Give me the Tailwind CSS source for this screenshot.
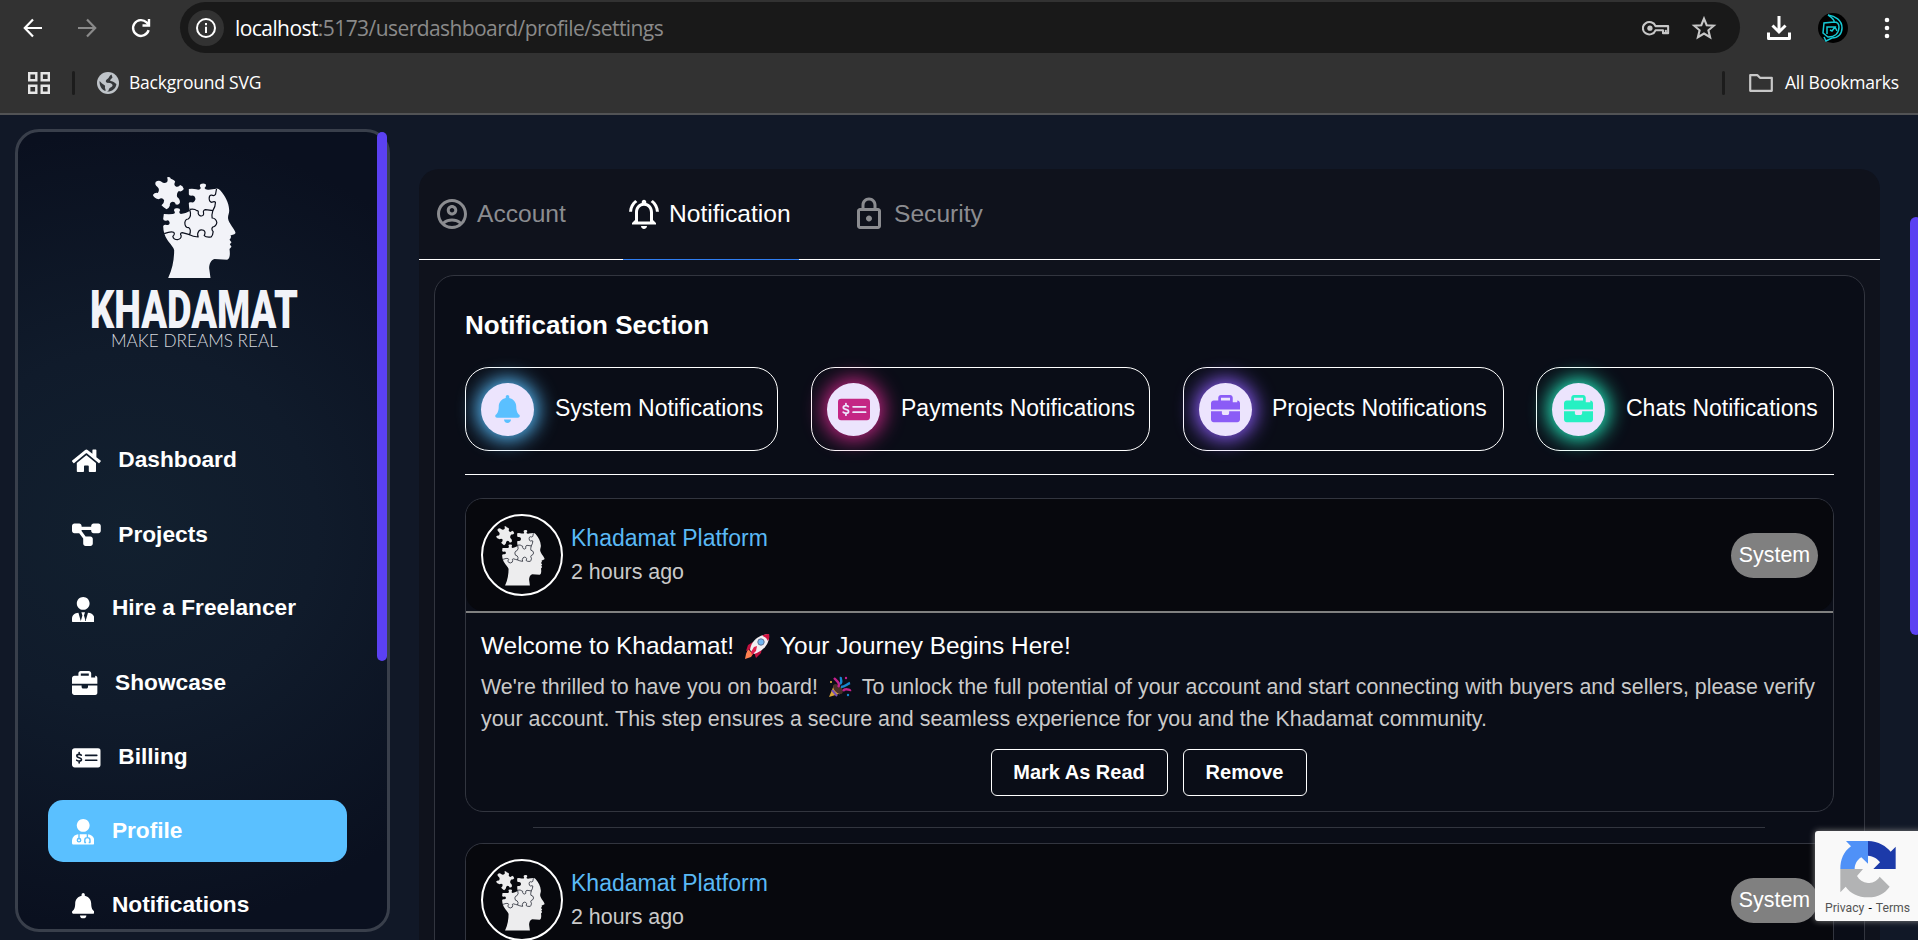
<!DOCTYPE html>
<html lang="en">
<head>
<meta charset="utf-8">
<title>Khadamat - Notification settings</title>
<script src="https://cdn.jsdelivr.net/npm/@tailwindcss/browser@4"></script>
</head>
<body class="h-[940px] w-[1918px] overflow-hidden bg-[#111827] font-['Liberation_Sans',Arial,sans-serif] text-white">

<svg width="0" height="0" class="absolute">
  <symbol id="head" viewBox="455 180 260 312">
    <path fill="currentColor" d="M503 187Q512 184 514 191Q526 195 527 200Q521 210 530 215Q538 217 542 210Q550 212 553 222Q546 232 538 228Q530 236 533 246Q543 254 541 264Q536 272 528 268Q528 260 519 260Q510 262 511 272Q508 280 501 283Q492 278 486 271Q494 266 494 256Q488 246 478 253Q464 250 460 240Q466 232 475 234Q482 224 474 216Q464 208 469 200Q478 194 486 200Q494 208 503 201Q506 196 503 187Z"/>
    <path fill="currentColor" d="M568 222Q580 220 590 223Q602 226 604 219Q598 211 604 207Q611 204 618 207Q622 213 615 219Q617 225 628 224L650 221Q657 220 662 226C676 242 688 262 689 285C690 295 684 302 686 312C688 325 706 343 708 353C708 358 698 360 693 361Q697 368 690 374L696 382L691 388L696 395L690 402C692 415 692 432 683 434L645 432C634 434 629 448 629 460L633 489H506C520 460 524 430 524 405C520 390 496 375 492 345L491 333Q494 328 502 330Q512 330 510 321Q508 314 500 317Q492 318 491 312L493 297Q510 298 520 297Q530 295 524 288Q522 280 530 280Q542 278 542 286Q536 294 544 297Q556 297 571 288Q568 276 568 266Q567 260 576 262Q585 264 588 252Q586 240 575 242Q568 242 568 238Z"/>
    <g fill="none" stroke="#0b0f1c" stroke-width="3.6" stroke-linejoin="round">
      <path d="M571 283Q585 280 592 287Q598 286 596 295Q598 303 606 303Q614 302 612 293Q610 286 618 284L641 287"/>
      <path d="M651 222L648 238Q644 244 636 240Q629 240 629 250Q629 261 637 262Q645 258 648 262Q648 275 640 287Q636 300 638 309Q650 310 652 323Q650 334 640 336Q634 342 641 350Q640 362 635 366Q620 368 614 362Q620 350 612 346Q604 342 598 348Q592 356 596 366Q580 364 570 359Q576 345 568 338Q556 338 556 323Q558 312 566 312Q577 305 571 285"/>
      <path d="M494 356Q515 348 522 352Q528 356 520 364Q522 374 534 374Q546 372 545 362Q540 354 548 353Q560 356 570 359"/>
    </g>
  </symbol>
  <symbol id="bell" viewBox="0 0 448 512"><path fill="currentColor" d="M224 512c35.32 0 63.97-28.65 63.97-64H160.03c0 35.35 28.65 64 63.97 64zm215.39-149.71c-19.32-20.76-55.47-51.99-55.47-154.29 0-77.7-54.48-139.9-127.94-155.16V32c0-17.67-14.32-32-31.98-32s-31.98 14.33-31.98 32v20.84C118.56 68.1 64.08 130.3 64.08 208c0 102.3-36.15 133.53-55.47 154.29-6 6.45-8.66 14.16-8.61 21.71.11 16.4 12.98 32 32.1 32h383.8c19.12 0 32-15.6 32.1-32 .05-7.55-2.61-15.27-8.61-21.71z"/></symbol>
  <symbol id="case" viewBox="0 0 512 512"><path fill="currentColor" d="M320 320c0 17-14 32-32 32h-64c-18 0-32-15-32-32v-32H0v144c0 25.600 22.400 48 48 48h416c25.600 0 48-22.400 48-48V288H320v32zm144-192h-80V48c0-25.600-22.400-48-48-48H176c-25.600 0-48 22.400-48 48v48H48c-25.600 0-48 22.400-48 48v112h512V144c0-25.600-22.400-48-48-48zm-128-32H176V48h160v48z"/></symbol>
  <symbol id="check" viewBox="0 0 576 512">
    <mask id="checkcut"><rect width="576" height="512" fill="#fff"/><g fill="none" stroke="#000" stroke-width="32" stroke-linecap="round"><path d="M272 208H496M272 304H496"/><path d="M186 204C176 192 160 188 144 188C116 188 96 200 96 220C96 268 190 240 190 290C190 312 168 322 144 322C124 322 106 316 94 304M143 150V186M143 324V358"/></g></mask>
    <rect y="64" width="576" height="384" rx="56" fill="currentColor" mask="url(#checkcut)"/>
  </symbol>
</svg>

<div class="flex h-full w-full flex-col">
  <!-- browser toolbar -->
  <header class="h-[115px] w-full shrink-0 border-b-2 border-[#525355] bg-[#323232] font-['Open_Sans','Noto_Sans',sans-serif]">
    <div class="flex h-[55px] items-center pl-[20px]">
      <svg class="h-[26px] w-[26px]" viewBox="0 0 26 26" fill="none" stroke="#fff" stroke-width="2.200"><path d="M22 13H5M13 4.500L4.800 13L13 21.500"/></svg>
      <svg class="ml-[28px] h-[26px] w-[26px]" viewBox="0 0 26 26" fill="none" stroke="#8a8a8a" stroke-width="2.200"><path d="M4 13H21M13 4.500L21.200 13L13 21.500"/></svg>
      <svg class="ml-[28px] h-[26px] w-[26px]" viewBox="0 0 26 26" fill="none" stroke="#fff" stroke-width="2.400"><path d="M20.600 15.200A7.900 7.900 0 1 1 18.600 7.400L21 9.800"/><path d="M21 4V10.500H14.500" /></svg>
      <div class="ml-[26px] flex h-[51px] w-[1560px] items-center rounded-full bg-[#191919] pl-[8px]">
        <div class="flex h-[36px] w-[36px] items-center justify-center rounded-full bg-[#323232]">
          <svg class="h-[22px] w-[22px]" viewBox="0 0 22 22" fill="none" stroke="#fff" stroke-width="2"><circle cx="11" cy="11" r="9"/><path d="M11 9.800V16M11 6V8.200"/></svg>
        </div>
        <div class="ml-[11px] w-[440px] whitespace-nowrap text-[21px] leading-[30px] tracking-[-0.57px] text-[#8a8a8a]"><span class="text-white">localhost</span>:5173/userdashboard/profile/settings</div>
        <svg class="ml-[967px] h-[20px] w-[28px]" viewBox="0 0 30 20" fill="none" stroke="#c7c7c7" stroke-width="2.200"><path d="M14.500 8H28V15.500H22.500V12.500H14.500A7 6.600 0 1 1 14.500 8Z" stroke-linejoin="round"/><circle cx="8.500" cy="10.200" r="2.800" fill="#c7c7c7" stroke="none"/><path d="M25.500 12V15"/></svg>
        <svg class="ml-[21px] h-[24px] w-[26px]" viewBox="0 0 26 24" fill="none" stroke="#c7c7c7" stroke-width="2.100"><path d="M13 2.600L15.700 9.200L22.800 9.700L17.400 14.300L19.100 21.200L13 17.500L6.900 21.200L8.600 14.300L3.200 9.700L10.300 9.200Z"/></svg>
      </div>
      <svg class="ml-[26px] h-[26px] w-[26px]" viewBox="0 0 26 26" fill="none" stroke="#fff" stroke-width="3"><path d="M13 1V16M6.500 10.500L13 17L19.500 10.500"/><path d="M2.500 17.500V23.500H23.500V17.500" stroke-linejoin="round"/></svg>
      <svg class="ml-[26px] h-[30px] w-[30px]" viewBox="0 0 30 30"><circle cx="15" cy="15" r="15" fill="#000"/><g fill="none" stroke="#16c8d4" stroke-width="1.500"><path d="M10 2C17 3 24 7 24 15C24 21 20 25 14 25L8 28L6 24"/><path d="M10 2C14 5 17 7 16 9L6 10L5 20L10 24C17 24 21 20 21 14C21 11 19 9 16 9"/><path d="M9 21V14H17L14 18L12 17M17 14L19 18"/></g></svg>
      <svg class="ml-[35px] h-[24px] w-[8px]" viewBox="0 0 8 24" fill="#fff"><circle cx="4" cy="4" r="2.300"/><circle cx="4" cy="12" r="2.300"/><circle cx="4" cy="20" r="2.300"/></svg>
    </div>
    <div class="flex h-[56px] items-center pl-[28px] text-[17.500px] tracking-[-0.22px]">
      <svg class="h-[22px] w-[22px]" viewBox="0 0 22 22" fill="none" stroke="#e6e6e6" stroke-width="2.400"><path d="M1.200 1.200H8.300V8.300H1.200ZM13.700 1.200H20.800V8.300H13.700ZM1.200 13.700H8.300V20.800H1.200ZM13.700 13.700H20.800V20.800H13.700Z"/></svg>
      <div class="ml-[22px] h-[24px] w-[3px] rounded bg-[#1c1c1c]"></div>
      <svg class="ml-[22px] h-[22px] w-[22px]" viewBox="0 0 22 22"><circle cx="11" cy="11" r="11" fill="#bfc4c9"/><g fill="#35383b"><path d="M14.500 2.600C12 4 12.500 5.500 11 6.500C9 8 8 9 9.500 10.500C11 11.500 15 10.500 15.500 13C16 15 12.500 15.500 12 17C11.500 18.500 11.500 19 10 19.500C14 20 19 17 19.400 12C18 11 16.500 9.500 13.800 9C12 8.500 14.500 6.500 15.500 5.500Z"/><path d="M2.600 9C2.200 14 5 18 8.500 19C9 17 7.500 16.500 8 15C8.800 13 6 12.500 5 11.500Z"/></g></svg>
      <div class="-mt-[2px] ml-[10px] w-[140px] whitespace-nowrap">Background SVG</div>
      <div class="ml-[1453px] h-[24px] w-[3px] rounded bg-[#1c1c1c]"></div>
      <svg class="ml-[24px] h-[20px] w-[24px]" viewBox="0 0 24 20" fill="none" stroke="#c7c7c7" stroke-width="2.200" stroke-linejoin="round"><path d="M1.200 2.200H8.500L11 4.800H22.800V17.800H1.200Z"/></svg>
      <div class="-mt-[2px] ml-[12px] whitespace-nowrap">All Bookmarks</div>
    </div>
  </header>

  <div class="flex h-[825px] w-full">
    <!-- sidebar -->
    <aside class="relative ml-[15px] mt-[14px] h-[803px] w-[375px] shrink-0 overflow-hidden rounded-[24px] border-[3px] border-[#393f4b] bg-[radial-gradient(ellipse_420px_400px_at_30%_50%,#12202f_0%,#101b2b_45%,#0a101f_100%)]">
      <div class="flex flex-col items-center pr-[10px]">
        <svg class="-ml-[6px] mt-[43px] h-[104px] w-[87px] text-[#f2f3f8]"><use href="#head"/></svg>
        <svg class="-ml-[8px] mt-[4px] h-[72px] w-[220px] overflow-visible" viewBox="0 0 220 72"><text x="6" y="44.500" textLength="208" lengthAdjust="spacingAndGlyphs" class="fill-[#f2f3f8] font-['Roboto'] text-[53px] font-black">KHADAMAT</text><text x="27" y="63.500" textLength="167" lengthAdjust="spacingAndGlyphs" class="fill-[#d5d8de] font-['Lato'] text-[18px] font-light">MAKE DREAMS REAL</text></svg>
      </div>
      <nav class="ml-[30px] mt-[74px] flex w-[299px] flex-col gap-[12.200px] text-[22.700px] font-bold">
        <a class="flex h-[62px] items-center gap-[17.500px] pl-[24px]"><svg class="mt-[2px] h-[25.600px] w-[28.800px]" viewBox="0 0 576 512" fill="#fff"><path d="M280.370 148.260L96 300.110V464a16 16 0 0 0 16 16l112.060-.29a16 16 0 0 0 15.920-16V368a16 16 0 0 1 16-16h64a16 16 0 0 1 16 16v95.640a16 16 0 0 0 16 16.050L464 480a16 16 0 0 0 16-16V300L295.670 148.260a12.190 12.190 0 0 0-15.300 0zM571.600 251.470L488 182.560V44.050a12 12 0 0 0-12-12h-56a12 12 0 0 0-12 12v72.610L318.470 43a48 48 0 0 0-61 0L4.340 251.470a12 12 0 0 0-1.600 16.900l25.500 31A12 12 0 0 0 45.150 301l235.220-193.740a12.190 12.190 0 0 1 15.300 0L530.900 301a12 12 0 0 0 16.900-1.600l25.500-31a12 12 0 0 0-1.700-16.930z"/></svg><span class="-mt-[1px]">Dashboard</span></a>
        <a class="flex h-[62px] items-center gap-[17.500px] pl-[24px]"><svg class="mt-[2px] h-[25.600px] w-[28.800px]" viewBox="0 0 576 512" fill="#fff"><path d="M0 80C0 53.500 21.500 32 48 32h96c26.500 0 48 21.500 48 48V96H384V80c0-26.500 21.500-48 48-48h96c26.500 0 48 21.500 48 48v96c0 26.500-21.500 48-48 48H432c-26.500 0-48-21.500-48-48V160H192v16c0 1.700-.1 3.400-.3 5L272 288h96c26.500 0 48 21.500 48 48v96c0 26.500-21.500 48-48 48H272c-26.500 0-48-21.500-48-48V336c0-1.700 .1-3.400 .3-5L144 224H48c-26.500 0-48-21.500-48-48V80z"/></svg><span class="-mt-[1px]">Projects</span></a>
        <a class="flex h-[62px] items-center gap-[17.500px] pl-[24px]"><svg class="mt-[2px] h-[25.600px] w-[22.400px]" viewBox="0 0 448 512" fill="#fff"><path d="M224 256c70.700 0 128-57.300 128-128S294.700 0 224 0 96 57.300 96 128s57.300 128 128 128zm95.800 56.600L272 480l-32-110 20-66h-72l20 66-32 110-47.800-167.400C56.900 316 0 360.300 0 432.400V480c0 18 14 32 32 32h384c18 0 32-14 32-32v-47.600c0-72.100-56.900-116.400-128.200-119.800z"/></svg><span class="-mt-[2px]">Hire a Freelancer</span></a>
        <a class="flex h-[62px] items-center gap-[17.500px] pl-[24px]"><svg class="mt-[2px] h-[25.600px] w-[25.600px]"><use href="#case"/></svg><span class="-mt-[2px]">Showcase</span></a>
        <a class="flex h-[62px] items-center gap-[17.500px] pl-[24px]"><svg class="mt-[2px] h-[25.600px] w-[28.800px]"><use href="#check"/></svg><span class="-mt-[2px]">Billing</span></a>
        <a class="flex h-[62px] items-center gap-[17.500px] rounded-[15px] bg-[#5ac0ff] pl-[24px]"><svg class="mt-[2px] h-[25.600px] w-[22.400px]" viewBox="0 0 448 512" fill="#fff"><path d="M224 256c70.700 0 128-57.300 128-128S294.700 0 224 0 96 57.300 96 128s57.300 128 128 128z"/><path d="M130 304H318C400 310 448 370 448 440V480C448 498 434 512 416 512H32C14 512 0 498 0 480V440C0 370 48 310 130 304Z"/><g fill="none" stroke="#5ac0ff" stroke-width="28"><path d="M140 300V392M308 300V372M256 470V420C256 390 280 372 308 372C336 372 360 390 360 420V470"/><circle cx="140" cy="424" r="34"/><path d="M248 470H282M334 470H368"/></g></svg><span class="-mt-[2px]">Profile</span></a>
        <a class="flex h-[62px] items-center gap-[17.500px] pl-[24px]"><svg class="mt-[2px] h-[25.600px] w-[22.400px]"><use href="#bell"/></svg><span class="-mt-[2px]">Notifications</span></a>
      </nav>
    </aside>
    <!-- sidebar scrollbar thumb, drawn over the rounded border -->
    <div class="absolute left-[377px] top-[132px] h-[529px] w-[10px] rounded-full bg-[#5b41f2]"></div>

    <!-- settings panel -->
    <main class="ml-[29px] mt-[54px] h-[771px] w-[1461px] shrink-0 rounded-t-[20px] bg-[#0f121c]">
      <div class="flex h-[91px] border-b border-white text-[24.600px] text-[#8b8c90]">
        <div class="flex w-[204px] items-center gap-[7px] pl-[15px]"><svg class="h-[36px] w-[36px]" viewBox="0 0 24 24" fill="currentColor"><path fill-rule="evenodd" d="M12 2C6.480 2 2 6.480 2 12s4.480 10 10 10 10-4.480 10-10S17.520 2 12 2M7.350 18.500C8.660 17.560 10.260 17 12 17s3.340.56 4.650 1.500c-1.310.94-2.910 1.500-4.650 1.500s-3.340-.56-4.650-1.500m10.790-1.380C16.450 15.800 14.320 15 12 15s-4.450.8-6.140 2.120C4.700 15.730 4 13.950 4 12c0-4.420 3.580-8 8-8s8 3.580 8 8c0 1.950-.7 3.730-1.860 5.120M12 6c-1.930 0-3.500 1.570-3.500 3.500S10.070 13 12 13s3.500-1.570 3.500-3.500S13.930 6 12 6m0 5c-.83 0-1.500-.67-1.500-1.500S11.170 8 12 8s1.500.67 1.500 1.500S12.830 11 12 11"/></svg>Account</div>
        <div class="-mb-px flex w-[176px] items-center gap-[7px] border-b border-[#2f7df0] pl-[3px] text-white"><svg class="h-[36px] w-[36px]" viewBox="0 0 24 24" fill="currentColor"><path d="M12 22c1.100 0 2-.9 2-2h-4c0 1.100.9 2 2 2zm6-6v-5c0-3.070-1.630-5.640-4.500-6.320V4c0-.83-.67-1.500-1.500-1.500s-1.500.67-1.500 1.500v.68C7.640 5.360 6 7.920 6 11v5l-2 2v1h16v-1l-2-2zm-2 1H8v-6c0-2.480 1.510-4.500 4-4.500s4 2.020 4 4.500v6zM7.580 4.080L6.150 2.650C3.750 4.480 2.170 7.300 2.030 10.500h2c.15-2.650 1.510-4.970 3.550-6.420zm12.390 6.420h2c-.15-3.200-1.730-6.020-4.120-7.850l-1.420 1.430c2.020 1.450 3.390 3.770 3.540 6.420z"/></svg>Notification</div>
        <div class="flex items-center gap-[7px] pl-[52px]"><svg class="h-[36px] w-[36px]" viewBox="0 0 24 24" fill="currentColor"><path d="M18 8h-1V6c0-2.760-2.240-5-5-5S7 3.240 7 6v2H6c-1.100 0-2 .9-2 2v10c0 1.100.9 2 2 2h12c1.100 0 2-.9 2-2V10c0-1.100-.9-2-2-2zM9 6c0-1.660 1.340-3 3-3s3 1.340 3 3v2H9V6zm9 14H6V10h12v10zm-6-3c1.100 0 2-.9 2-2s-.9-2-2-2-2 .9-2 2 .9 2 2 2z"/></svg>Security</div>
      </div>

      <section class="ml-[15px] mt-[15px] h-[690px] w-[1431px] rounded-t-[20px] border border-[#32353f] bg-[#0a0d17] px-[30px] pt-[34px]">
        <h2 class="h-[30px] text-[26px] font-bold leading-[30px]">Notification Section</h2>
        <div class="mt-[27px] flex h-[84px] w-[1369px] gap-[33px] text-[23px]">
          <div class="flex w-[313px] items-center gap-[21px] whitespace-nowrap rounded-[24px] border border-white pl-[15px]"><span class="flex h-[53px] w-[53px] shrink-0 items-center justify-center rounded-full bg-[#ece4fd] text-[#5ac0ff] shadow-[0_0_20px_4px_#5ac0ff]"><svg class="h-[28px] w-[25px]"><use href="#bell"/></svg></span><span class="-mt-[2px]">System Notifications</span></div>
          <div class="flex w-[339px] items-center gap-[21px] whitespace-nowrap rounded-[24px] border border-white pl-[15px]"><span class="flex h-[53px] w-[53px] shrink-0 items-center justify-center rounded-full bg-[#ece4fd] text-[#c42684] shadow-[0_0_20px_4px_#c42684]"><svg class="h-[29px] w-[32px]"><use href="#check"/></svg></span><span class="-mt-[2px]">Payments Notifications</span></div>
          <div class="flex w-[321px] items-center gap-[20px] whitespace-nowrap rounded-[24px] border border-white pl-[15px]"><span class="flex h-[53px] w-[53px] shrink-0 items-center justify-center rounded-full bg-[#ece4fd] text-[#8b5cf6] shadow-[0_0_20px_4px_#8b5cf6]"><svg class="h-[29px] w-[29px]"><use href="#case"/></svg></span><span class="-mt-[2px]">Projects Notifications</span></div>
          <div class="-ml-px flex w-[298px] items-center gap-[21px] whitespace-nowrap rounded-[24px] border border-white pl-[15px]"><span class="flex h-[53px] w-[53px] shrink-0 items-center justify-center rounded-full bg-[#ece4fd] text-[#26f0c2] shadow-[0_0_20px_4px_#26f0c2]"><svg class="h-[29px] w-[29px]"><use href="#case"/></svg></span><span class="-mt-[2px]">Chats Notifications</span></div>
        </div>
        <div class="mt-[23px] h-px w-[1369px] bg-white"></div>

        <article class="mt-[23px] h-[314px] w-[1369px] rounded-[18px] border border-[#32353f]">
          <div class="border-b-2 border-[#808080]">
            <div class="flex h-[112px] items-center rounded-[17px] bg-[#07080d] px-[15px]">
              <div class="flex h-[82px] w-[82px] items-center justify-center rounded-full border-2 border-white"><svg class="-ml-[3px] mt-[1px] h-[61px] w-[51px] text-[#ededee]"><use href="#head"/></svg></div>
              <div class="ml-[8px] flex flex-1 flex-col"><span class="h-[34px] text-[23px] leading-[34px] text-[#5ab9f5]">Khadamat Platform</span><span class="h-[34px] text-[21.400px] leading-[34px] text-[#cacaca]">2 hours ago</span></div>
              <div class="flex h-[45px] w-[87px] items-center justify-center rounded-[23px] bg-[#808080] text-[21.400px]">System</div>
            </div>
          </div>
          <div class="px-[15px] pt-[17px]">
            <h3 class="flex h-[32px] items-center whitespace-nowrap text-[24.400px]">Welcome to Khadamat!<svg class="mx-[9px] h-[28px] w-[28px]" viewBox="0 0 28 28"><path d="M5 17L3 22L2 27L8 25L10 22Z" fill="#ff8050"/><path d="M10 10L5 13L3 19L8 17ZM19 16L18 21L13 26L11 20Z" fill="#c4103f"/><path d="M7 18C8 10 14 3 26 2C27 12 20 19 11 22Z" fill="#f1eef2"/><path d="M19 3.500Q23 1.500 26 2Q27 6 25 9Q23 5 19 3.500Z" fill="#d0103f"/><circle cx="18" cy="10" r="3.200" fill="#6fb5f2" stroke="#5c6f93"/><path d="M14 14L13 19L9 23L8 20L11 15Z" fill="#e3214e"/></svg>Your Journey Begins Here!</h3>
            <p class="mt-[9px] whitespace-nowrap text-[21.420px] leading-[32px] text-[#cacaca]"><span class="flex h-[32px] w-[1334px] items-center justify-between"><span>We're thrilled to have you on board!</span><svg class="h-[24px] w-[24px]" viewBox="0 0 24 24" fill="none"><path d="M1 22L6 10L14 18Z" fill="#d9a437"/><path d="M4 15L9 21M6 11L12 19" stroke="#7650b8" stroke-width="2"/><ellipse cx="10" cy="14" rx="3.500" ry="6" transform="rotate(-45 10 14)" fill="#4a3028"/><path d="M10 12C13 9 9 6 6 3M15 16C18 12 21 16 23 15" stroke="#c3208c" stroke-width="2.400"/><path d="M13 12C17 12 19 9 22 8M12 9C15 7 12 4 13 2" stroke="#1687ce" stroke-width="2.400"/><circle cx="3" cy="7" r="1" fill="#f0c040"/><circle cx="18" cy="3" r="1.200" fill="#c3208c"/><circle cx="20" cy="20" r="1.200" fill="#1687ce"/></svg><span>To unlock the full potential of your account and start connecting with buyers and sellers, please verify</span></span>your account. This step ensures a secure and seamless experience for you and the Khadamat community.</p>
            <div class="mt-[14px] flex h-[47px] justify-center gap-[15px] pr-[2px] text-[20px] font-bold"><button class="w-[177px] rounded-[6px] border border-white pb-px">Mark As Read</button><button class="w-[124px] rounded-[6px] border border-white pb-px">Remove</button></div>
          </div>
        </article>
        <div class="ml-[68px] mt-[15px] h-px w-[1232px] bg-[#32353f]"></div>
        <article class="mt-[15px] h-[97px] w-[1369px] overflow-hidden rounded-t-[18px] border border-b-0 border-[#32353f]">
          <div class="flex h-[112px] items-center bg-[#07080d] px-[15px]">
            <div class="flex h-[82px] w-[82px] items-center justify-center rounded-full border-2 border-white"><svg class="-ml-[3px] mt-[1px] h-[61px] w-[51px] text-[#ededee]"><use href="#head"/></svg></div>
            <div class="ml-[8px] flex flex-1 flex-col"><span class="h-[34px] text-[23px] leading-[34px] text-[#5ab9f5]">Khadamat Platform</span><span class="h-[34px] text-[21.400px] leading-[34px] text-[#cacaca]">2 hours ago</span></div>
            <div class="flex h-[45px] w-[87px] items-center justify-center rounded-[23px] bg-[#808080] text-[21.400px]">System</div>
          </div>
        </article>
      </section>
    </main>
  </div>
</div>

<!-- page scrollbar thumb -->
<div class="absolute left-[1910px] top-[217px] h-[418px] w-[12px] rounded-full bg-[#5b41f2]"></div>

<!-- reCAPTCHA badge -->
<div class="absolute left-[1815px] top-[831px] flex h-[90px] w-[110px] flex-col rounded-[3px] bg-[#f9f9f9] shadow-[0_0_6px_#808080]">
  <svg class="ml-[25px] mt-[9px] h-[58px] w-[57px]" viewBox="840 1080 171 174"><path fill="#1c3aa9" d="M924 1083C955 1083 980 1100 992 1115L1007 1100V1167H940L960 1147C955 1138 940 1128 924 1127Z"/><path fill="#4f91f7" d="M924 1083H858L873 1099C850 1115 841 1140 841 1167H884C884 1155 890 1140 904 1132L924 1151Z"/><path fill="#b2b3b4" d="M841 1167V1237L857 1220C870 1240 895 1252 924 1252C955 1252 975 1240 989 1220L959 1190C950 1205 935 1209 924 1209C908 1207 898 1200 891 1188L909 1167Z"/></svg>
  <div class="ml-[10px] mt-[3px] whitespace-nowrap font-['Roboto',sans-serif] text-[12.200px] leading-[15px] text-[#555]">Privacy<span class="mx-[4px] text-black">-</span>Terms</div>
</div>
</body>
</html>
